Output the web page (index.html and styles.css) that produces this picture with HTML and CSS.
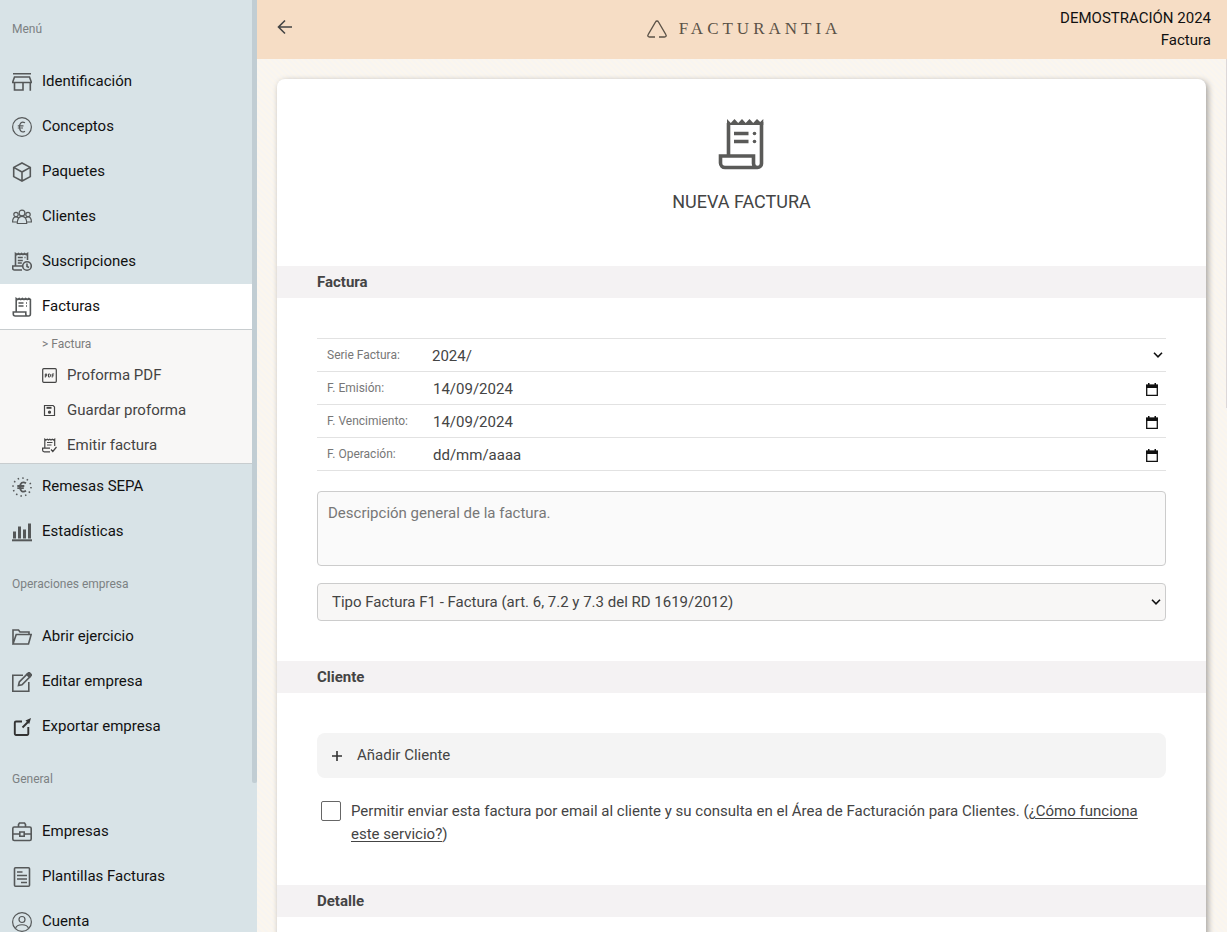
FILE: index.html
```html
<!DOCTYPE html>
<html lang="es">
<head>
<meta charset="utf-8">
<title>Facturantia - Nueva factura</title>
<link rel="stylesheet" href="styles.css">
</head>
<body>
<div class="app">
  <aside class="sidebar">
    <nav class="menu" aria-label="Menú">
      <h2 class="menu-title menu-title-first">Menú</h2>
      <a class="item" href="#"><svg class="icon" viewBox="0 0 20 20"><path d="M1 1.800h18M2.500 5h15l1.700 4.800v.7H.8v-.7zM2.500 10.500V18h8.500v-7.500M18.300 10.500V18.700"/></svg>Identificación</a>
      <a class="item" href="#"><svg class="icon thin" viewBox="0 0 20 20"><circle cx="10" cy="10" r="9.400"/><path d="M13 5.800c-3.300-2-5.500.4-5.500 4.200s2.200 6.200 5.500 4.200M5.800 8.900h5.700M5.800 11h5.200"/></svg>Conceptos</a>
      <a class="item" href="#"><svg class="icon" viewBox="0 0 20 20"><path d="M10 1l8.300 4.400v9.200L10 19l-8.300-4.400V5.400zM1.700 5.400 10 10l8.300-4.600M10 10v9"/></svg>Paquetes</a>
      <a class="item" href="#"><svg class="icon thin" viewBox="0 0 20 20"><circle cx="10" cy="6" r="2.900"/><circle cx="4" cy="7.500" r="2.200"/><circle cx="16" cy="7.500" r="2.200"/><path d="M5.300 16.500c0-4.700 1.500-7.200 4.700-7.200s4.700 2.500 4.700 7.200zM5 15H.6c0-3.500 1.200-5.200 3.400-5.200 1 0 1.700.3 2.300 1M15 15h4.400c0-3.500-1.200-5.200-3.400-5.200-1 0-1.700.3-2.300 1"/></svg>Clientes</a>
      <a class="item" href="#"><svg class="icon" viewBox="0 0 20 20"><path d="M3.500 14V1.500l1.500 1 1.500-1 1.500 1 1.500-1 1.500 1 1.500-1 1.500 1 1.500-1V8M10 18H2.500C1.300 18 .7 17.300.7 16v-2H10M5.800 5.500h5M5.800 8.500h5M12.500 5.500h1M5.800 11h4"/><circle cx="15" cy="14" r="4.300"/><path d="M15 11.500v3l2 1"/></svg>Suscripciones</a>
      <a class="item item-active" href="#" aria-current="page"><svg class="icon" viewBox="0 0 20 20"><path d="M4.200 15V1.500l1.500 1 1.500-1 1.600 1 1.600-1 1.600 1 1.600-1 1.600 1 1.600-1 1.600 1V17c0 1.300-.7 2-1.800 2H3.200C2 19 1.300 18.300 1.300 17v-2h12.500v2c0 1.300.7 2 1.800 2M6.500 6h5M6.500 9h5M14 6h1M14 9h1"/></svg>Facturas</a>
      <div class="submenu">
        <span class="submenu-title">&gt; Factura</span>
        <button class="subitem" type="button"><svg class="icon-s" viewBox="0 0 15 15"><rect x=".7" y=".7" width="13.600" height="13.600" rx="1"/><path d="M3.300 9.500V6h1.400v2H3.300M6.500 6v3h1.300l.6-.7V6.600L7.800 6zM10.200 9.500V6h1.900M10.200 7.800h1.500" stroke-width="1"/></svg>Proforma PDF</button>
        <button class="subitem" type="button"><svg class="icon-s" viewBox="0 0 15 15"><path d="M2.500 2.500h8.600l1.400 1.400v8.600h-10z"/><path d="M4.500 4.800h5" stroke-width="2"/><circle cx="7.500" cy="9.200" r="1" fill="currentColor"/></svg>Guardar proforma</button>
        <button class="subitem" type="button"><svg class="icon-s" viewBox="0 0 15 15"><path d="M2.800 10V1.200l1.200.8 1.300-.8 1.200.8 1.300-.8L9 2l1.300-.8 1.200.8 1.200-.8V8M8 13.800H2.300C1.200 13.800.6 13.200.6 12v-1.800H8M5 4.500h5.500M5 7h4.500M9 11.500l1.800 2L14.500 9"/></svg>Emitir factura</button>
      </div>
      <a class="item" href="#"><svg class="icon" viewBox="0 0 20 20"><circle cx="10" cy="10" r="9" stroke-dasharray="1.500 3.210"/><path d="M14 6.200c-3.300-2.200-6 0-6 3.800s2.700 6 6 3.800M5.300 9h7M5.300 11.200h6.500" stroke-width="1.800"/></svg>Remesas SEPA</a>
      <a class="item" href="#"><svg class="icon" viewBox="0 0 20 20"><path d="M0 18.300h20" stroke-width="2"/><path d="M2.500 16.500v-7M7.500 16.500v-12M12.500 16.500v-9M17.500 16.500v-15" stroke-width="3"/></svg>Estadísticas</a>
      <h2 class="menu-title">Operaciones empresa</h2>
      <a class="item" href="#"><svg class="icon" viewBox="0 0 20 20"><path d="M1 17V3h5.500l1.500 2h9v2.500M1 17 4.200 7.500h15L16.500 17z"/></svg>Abrir ejercicio</a>
      <a class="item" href="#"><svg class="icon" viewBox="0 0 20 20"><path d="M11 3.200H.8v16h16V10M6.500 13.500l.8-3.500 8-8 2.700 2.700-8 8z"/><path d="M14.800 2.500 17 .3 19.700 3l-2.200 2.200z" fill="currentColor"/></svg>Editar empresa</a>
      <a class="item" href="#"><svg class="icon dark" viewBox="0 0 20 20"><path d="M10 4.500H4A1.200 1.200 0 0 0 2.800 5.700v11.100A1.200 1.200 0 0 0 4 18h11.100a1.200 1.200 0 0 0 1.200-1.200V10M10.500 10.500l6-6"/><path d="M13.500 3.500 19 1l-1.800 6z" fill="currentColor" stroke="none"/></svg>Exportar empresa</a>
      <h2 class="menu-title">General</h2>
      <a class="item" href="#"><svg class="icon" viewBox="0 0 20 20"><rect x=".8" y="5" width="18.400" height="13.500" rx="1.500"/><path d="M6.500 5V2.500L7.500 1h5l1 1.500V5M1 12h6.500M12.500 12H19M7.800 10h4.400v4.200H7.800z"/></svg>Empresas</a>
      <a class="item" href="#"><svg class="icon" viewBox="0 0 20 20"><rect x="2.500" y=".8" width="15" height="18.400" rx="1"/><path d="M5 5h5.500M5 8.500h10M5 12h10M9 15.500h6"/></svg>Plantillas Facturas</a>
      <a class="item" href="#"><svg class="icon thin" viewBox="0 0 20 20"><circle cx="10" cy="10" r="9.400"/><circle cx="10" cy="7.500" r="3"/><path d="M3.500 16.500c1.500-5 11.500-5 13 0"/></svg>Cuenta</a>
    </nav>
    <div class="track"><div class="thumb"></div></div>
  </aside>
  <div class="page">
    <header class="topbar">
      <button class="back" type="button" aria-label="Volver"><svg viewBox="0 0 16 16"><path d="M15 8H2M8 1.500 1.500 8 8 14.500"/></svg></button>
      <a class="brand" href="#"><svg viewBox="0 0 20 18"><path d="M8 17H2.500C1 17 .4 15.800 1.200 14.500L8.500 2c.7-1.300 2.300-1.300 3 0l7.300 12.500c.8 1.300.2 2.500-1.300 2.500H12"/></svg>FACTURANTIA</a>
      <div class="account"><span>DEMOSTRACIÓN 2024</span><span>Factura</span></div>
    </header>
    <div class="body">
      <main class="content">
        <form class="card">
          <div class="hero">
            <svg class="hero-icon" viewBox="0 0 48 52"><path d="M10.500 37V5M43.500 4v41.500a4 4 0 0 1-4 4H7a4.500 4.500 0 0 1-4.500-4.500v-7h33v7.500a4 4 0 0 0 4 4M16 15.500h14.500M16 23.500h14.500" stroke-width="3.600"/><path d="M9 6V1l3.800 4 3.700-4 3.700 4L24 1l3.700 4 3.800-4 3.700 4L39 1l3.200 3L45.300 1v6H9z" fill="currentColor" stroke="none"/><circle cx="36.500" cy="15.500" r="1.800" fill="currentColor" stroke="none"/><circle cx="36.500" cy="23.500" r="1.800" fill="currentColor" stroke="none"/></svg>
            <h1>NUEVA FACTURA</h1>
          </div>
          <h2 class="section">Factura</h2>
          <div class="block">
            <div class="fields">
              <div class="field"><label for="serie">Serie Factura:</label><select id="serie"><option>2024/</option></select><svg class="chev" viewBox="0 0 10 6"><path d="M1 .8l4 4 4-4"/></svg></div>
              <div class="field"><label for="emision">F. Emisión:</label><input id="emision" type="text" value="14/09/2024"><button class="cal" type="button" aria-label="Elegir fecha de emisión"><svg viewBox="0 0 12 13"><path d="M.7 2.500h10.600v9.800H.7z"/><path d="M0 1.500h12V5H0zM2 0h1.500v2H2zM8.500 0H10v2H8.500z" fill="currentColor" stroke="none"/></svg></button></div>
              <div class="field"><label for="vencimiento">F. Vencimiento:</label><input id="vencimiento" type="text" value="14/09/2024"><button class="cal" type="button" aria-label="Elegir fecha de vencimiento"><svg viewBox="0 0 12 13"><path d="M.7 2.500h10.600v9.800H.7z"/><path d="M0 1.500h12V5H0zM2 0h1.500v2H2zM8.500 0H10v2H8.500z" fill="currentColor" stroke="none"/></svg></button></div>
              <div class="field"><label for="operacion">F. Operación:</label><input id="operacion" type="text" placeholder="dd/mm/aaaa"><button class="cal" type="button" aria-label="Elegir fecha de operación"><svg viewBox="0 0 12 13"><path d="M.7 2.500h10.600v9.800H.7z"/><path d="M0 1.500h12V5H0zM2 0h1.500v2H2zM8.500 0H10v2H8.500z" fill="currentColor" stroke="none"/></svg></button></div>
            </div>
            <textarea class="description" aria-label="Descripción" placeholder="Descripción general de la factura."></textarea>
            <div class="type"><select aria-label="Tipo de factura"><option>Tipo Factura F1 - Factura (art. 6, 7.2 y 7.3 del RD 1619/2012)</option></select><svg class="chev" viewBox="0 0 10 6"><path d="M1 .8l4 4 4-4"/></svg></div>
          </div>
          <h2 class="section">Cliente</h2>
          <div class="block block-client">
            <button class="add" type="button"><svg viewBox="0 0 10 10"><path d="M5 0v10M0 5h10"/></svg>Añadir Cliente</button>
            <div class="consent"><input id="permitir" type="checkbox"><label for="permitir">Permitir enviar esta factura por email al cliente y su consulta en el Área de Facturación para Clientes. (<a href="#">¿Cómo funciona este servicio?</a>)</label></div>
          </div>
          <h2 class="section">Detalle</h2>
          <div class="block"></div>
        </form>
      </main>
      <div class="page-track"><div class="page-thumb"></div></div>
    </div>
  </div>
</div>
</body>
</html>
```
FILE: styles.css
```css
* { box-sizing: border-box; }
body { margin: 0; font: 15px/22px Roboto, sans-serif; color: #444; }
button, input, select, textarea { font: inherit; color: inherit; margin: 0; border: 0; background: none; }
button { cursor: pointer; padding: 0; text-align: left; }
h1, h2 { margin: 0; }
svg { fill: none; stroke: currentColor; flex: none; display: block; }

.app { display: flex; height: 100vh; overflow: hidden; }

.sidebar { flex: none; display: flex; width: 257px; background: #d8e3e7; overflow: hidden; }
.menu { flex: 1; }
.track { width: 5px; }
.thumb { height: 84%; background: #c1cdd3; border-radius: 0 0 2px 2px; }
.menu-title { height: 60px; padding: 0 12px; font-size: 12px; font-weight: 400; line-height: 60px; color: #7c8183; }
.menu-title-first { height: 59px; line-height: 58px; }
.item { display: flex; align-items: center; gap: 10px; height: 45px; padding: 0 12px 2px; color: #111; text-decoration: none; }
.icon { width: 20px; height: 20px; color: #555859; stroke-width: 1.6; margin-top: 3px; }
.icon.thin { stroke-width: 1.2; }
.icon.dark { color: #333; stroke-width: 1.9; }
.item-active { background: #fff; }
.submenu { background: #f8f7f6; border: solid #c8cdcf; border-width: 1px 0; }
.submenu-title { display: block; padding-left: 42px; font-size: 12px; line-height: 28px; color: #7c7c7c; }
.subitem { display: flex; align-items: center; gap: 10px; width: 100%; height: 35px; padding: 0 0 2px 42px; color: #444; }
.icon-s { width: 15px; height: 15px; margin-top: 2px; stroke-width: 1.2; }

.page { flex: 1; min-width: 0; display: flex; flex-direction: column; }
.topbar { flex: none; display: grid; grid-template-columns: 1fr auto 1fr; align-items: center; height: 59px; padding: 0 16px 2px 20px; background: #f6ddc5; }
.back { width: 16px; height: 16px; color: #444; margin-bottom: 4px; }
.back svg { width: 16px; height: 16px; stroke-width: 1.6; }
.brand { display: flex; align-items: center; gap: 12px; font: 17px/22px "Liberation Serif", serif; letter-spacing: 4px; color: #5b5247; text-decoration: none; }
.brand svg { width: 20px; height: 18px; stroke-width: 1.4; }
.account { display: flex; flex-direction: column; align-items: flex-end; color: #111; }

.body { flex: 1; min-height: 0; display: flex; background: repeating-linear-gradient(45deg, #fbf6ee 0 2px, #f8f5f1 2px 4px); }
.content { flex: 1; min-width: 0; padding: 20px; overflow: hidden; }
.page-track { width: 1px; }
.page-thumb { height: 40%; background: #ddd8d8; }
.card { background: #fff; border-radius: 8px; box-shadow: 2px 2px 6px rgba(0, 0, 0, .35); }
.hero { display: flex; flex-direction: column; align-items: center; gap: 20px; padding: 39px 0 53px; }
.hero-icon { width: 48px; height: 52px; color: #5a5a58; }
h1 { font-size: 18px; font-weight: 400; line-height: 23px; }
.section { padding: 0 40px; font-size: 15px; font-weight: 700; line-height: 32px; background: #f4f2f3; }
.block { padding: 40px; }
.block-client { padding-bottom: 39px; }

.fields { border-top: 1px solid #e2e2e2; }
.field { position: relative; display: flex; align-items: center; height: 33px; border-bottom: 1px solid #e2e2e2; }
.field label { width: 105px; padding-left: 10px; font-size: 12px; color: #777; }
.field select, .type select { appearance: none; flex: 1; min-width: 0; }
.field select { padding: 2px 10px 0; }
.field input { flex: 1; min-width: 0; padding: 2px 11px 0; }
.field input::placeholder { color: #444; opacity: 1; }
.chev { position: absolute; right: 3px; width: 10px; height: 6px; color: #111; stroke-width: 1.6; pointer-events: none; }
.cal { margin-right: 8px; padding-top: 2px; color: #111; }
.cal svg { width: 12px; height: 13px; stroke-width: 1.3; }
.description { display: block; width: 100%; height: 75px; margin: 20px 0 17px; padding: 10px; border: 1px solid #ccc; border-radius: 4px; background: #fafafa; resize: none; }
.description::placeholder { color: #777; }
.type { position: relative; display: flex; align-items: center; height: 38px; border: 1px solid #ccc; border-radius: 4px; background: #f8f7f6; }
.type select { height: 36px; padding: 0 14px; }
.type .chev { right: 4px; }

.add { display: flex; align-items: center; gap: 15px; width: 100%; height: 45px; padding: 0 15px 2px; border-radius: 8px; background: #f4f4f4; }
.add svg { width: 10px; height: 10px; margin-top: 2px; stroke-width: 1.6; color: #333; }
.consent { display: flex; align-items: flex-start; gap: 10px; padding: 22px 4px 0; line-height: 23px; }
.consent input { appearance: none; flex: none; width: 20px; height: 20px; margin-top: 1px; border: 1px solid #666; border-radius: 2px; background: #fff; }
.consent a { color: inherit; text-underline-offset: 2px; }
```
